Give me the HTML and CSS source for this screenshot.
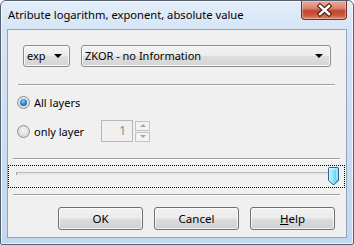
FILE: index.html
```html
<!DOCTYPE html>
<html>
  <head>
    <meta charset="utf-8">
    <title>Atribute logarithm, exponent, absolute value</title>
    <link rel="stylesheet" href="styles.css">
  </head>
  <body>
    <div class="window">
      <div class="titlebar">
        <span class="title">Atribute logarithm, exponent, absolute value</span>
        <div class="close">
          <svg width="46" height="19" viewBox="0 0 46 19">
            <path d="M19 6 L28 14 M28 6 L19 14" stroke="#4a1d15" stroke-width="4.5" stroke-linecap="square"/>
            <path d="M19 6 L28 14 M28 6 L19 14" stroke="#fff" stroke-width="2.4" stroke-linecap="square"/>
          </svg>
        </div>
      </div>

      <div class="client">
        <div class="combos">
          <div class="combo combo-small"><span>exp</span><i class="arrow"></i></div>
          <div class="combo combo-wide"><span>ZKOR - no Information</span><i class="arrow"></i></div>
        </div>

        <div class="sep sep-first"></div>

        <div class="opt opt-first">
          <span class="radio checked"></span>
          <span class="label">All layers</span>
        </div>
        <div class="opt">
          <span class="radio"></span>
          <span class="label label-fixed">only layer</span>
          <div class="spin-edit">1</div>
          <div class="spin-btns">
            <div class="spin-btn"><i class="up"></i></div>
            <div class="spin-btn"><i class="down"></i></div>
          </div>
        </div>

        <div class="sep sep-wide"></div>

        <div class="slider">
          <div class="track"></div>
          <svg class="thumb" width="11" height="19" viewBox="0 0 11 19">
            <defs>
              <linearGradient id="tg" x1="0" y1="0" x2="1" y2="0">
                <stop offset="0" stop-color="#d6f8ff"/>
                <stop offset="0.45" stop-color="#8ee6fb"/>
                <stop offset="1" stop-color="#3fc3ea"/>
              </linearGradient>
            </defs>
            <path d="M1.5 0.5 H9.5 Q10.5 0.5 10.5 1.5 V13.5 L6 17.5 H5 L0.5 13.5 V1.5 Q0.5 0.5 1.5 0.5 Z" fill="url(#tg)" stroke="#2c628b"/>
            <path d="M2 2 H9 V12.5" fill="none" stroke="#e8fcff" stroke-width="1"/>
          </svg>
        </div>

        <div class="sep sep-wide sep-last"></div>

        <div class="buttons">
          <button class="btn">OK</button>
          <button class="btn">Cancel</button>
          <button class="btn"><u>H</u>elp</button>
        </div>
      </div>
    </div>
  </body>
</html>
```

FILE: styles.css
```css
html, body {
  margin: 0;
  padding: 0;
  background: #fff;
}

body {
  font-family: "Noto Sans", "DejaVu Sans", sans-serif;
  font-size: 11px;
  color: #000;
}

.window {
  width: 354px;
  height: 245px;
  box-sizing: border-box;
  border: 1px solid #56606c;
  border-radius: 6px 6px 2px 2px;
  background: linear-gradient(to bottom, #e4eef9 0, #d4e4f5 30px, #c3d8ef 100%);
  box-shadow: inset 0 0 0 1px rgba(255, 255, 255, 0.7);
  display: flex;
  flex-direction: column;
  overflow: hidden;
}

.titlebar {
  height: 28px;
  display: flex;
  align-items: flex-start;
}

.title {
  margin: 6px 0 0 7px;
  line-height: 16px;
  font-size: 11.2px;
}

.close {
  margin-left: auto;
  margin-right: 6px;
  width: 46px;
  height: 19px;
  box-sizing: border-box;
  border: 1px solid #6e2c22;
  border-top: 0;
  border-radius: 0 0 4px 4px;
  background: linear-gradient(to bottom, #e9ab98 0, #d98672 40%, #c4432c 55%, #cc5a42 80%, #de8a72 100%);
  box-shadow: inset 0 0 0 1px rgba(255, 220, 210, 0.45);
}

.close svg {
  display: block;
  margin: -1px 0 0 -1px;
}

.client {
  margin: 0 6px 6px 6px;
  flex: 1;
  border: 1px solid #8ea3bc;
  background: #f0f0f0;
  display: flex;
  flex-direction: column;
}

.combos {
  display: flex;
  gap: 11px;
  margin: 15px 0 0 15px;
}

.combo {
  height: 22px;
  box-sizing: border-box;
  border: 1px solid #8c8c8c;
  border-radius: 3px;
  background: linear-gradient(to bottom, #f3f3f3 0, #ececec 48%, #dedede 52%, #d4d4d4 100%);
  box-shadow: inset 0 0 0 1px rgba(255, 255, 255, 0.8);
  display: flex;
  align-items: center;
  padding: 0 7px 0 3px;
}

.combo span {
  flex: 1;
  line-height: 18px;
}

.combo-small {
  width: 47px;
}

.combo-wide {
  width: 250px;
}

.arrow {
  width: 0;
  height: 0;
  border-left: 4px solid transparent;
  border-right: 4px solid transparent;
  border-top: 4px solid #000;
}

.sep {
  height: 0;
  border-top: 1px solid #a0a0a0;
  border-bottom: 1px solid #fff;
}

.sep-first {
  margin: 17px 11px 0 10px;
}

.sep-wide {
  margin: 16px 6px 0 5px;
}

.sep-last {
  margin-top: 6px;
}

.opt {
  display: flex;
  align-items: center;
  height: 22px;
  margin-left: 9px;
  margin-top: 7px;
}

.opt-first {
  margin-top: 5px;
}

.radio {
  width: 13px;
  height: 13px;
  box-sizing: border-box;
  border-radius: 50%;
  border: 1px solid #8e8f8f;
  background: radial-gradient(circle at 50% 40%, #f4f4f4 0, #e0e0e0 55%, #cfcfcf 100%);
  margin-right: 4px;
  position: relative;
}

.radio.checked::after {
  content: "";
  position: absolute;
  left: 2px;
  top: 2px;
  width: 7px;
  height: 7px;
  border-radius: 50%;
  background: radial-gradient(circle at 45% 35%, #8fd2f7 0, #2a8ad4 45%, #134f84 100%);
}

.label-fixed {
  width: 67px;
}

.spin-edit {
  width: 32px;
  height: 22px;
  box-sizing: border-box;
  border: 1px solid #b5b8bc;
  background: #f0f0f0;
  color: #8a8a8a;
  text-align: right;
  padding-right: 6px;
  line-height: 19px;
  font-size: 12px;
}

.spin-btns {
  margin-left: 2px;
  display: flex;
  flex-direction: column;
  gap: 1px;
}

.spin-btn {
  width: 15px;
  height: 10px;
  box-sizing: border-box;
  border: 1px solid #c2c4c6;
  background: #f3f3f3;
  display: flex;
  align-items: center;
  justify-content: center;
}

.spin-btn i {
  width: 0;
  height: 0;
  border-left: 3px solid transparent;
  border-right: 3px solid transparent;
}

.spin-btn .up {
  border-bottom: 3px solid #a7a7a7;
}

.spin-btn .down {
  border-top: 3px solid #a7a7a7;
}

.slider {
  margin-top: 5px;
  width: 337px;
  height: 23px;
  box-sizing: border-box;
  border: 1px dotted #000;
  position: relative;
}

.track {
  position: absolute;
  left: 7px;
  top: 6px;
  width: 314px;
  height: 2px;
  border-top: 1px solid #b9b9b9;
  background: #e6e6e6;
  border-left: 1px solid #9a9a9a;
}

.thumb {
  position: absolute;
  left: 319px;
  top: 1px;
}

.buttons {
  display: flex;
  justify-content: flex-end;
  gap: 11px;
  margin: 11px 11px 0 0;
}

.btn {
  width: 85px;
  height: 23px;
  box-sizing: border-box;
  border: 1px solid #707070;
  border-radius: 3px;
  background: linear-gradient(to bottom, #f2f2f2 0, #ebebeb 48%, #dddddd 52%, #cfcfcf 100%);
  box-shadow: inset 0 0 0 1px rgba(255, 255, 255, 0.75);
  font-family: inherit;
  font-size: 11.5px;
  color: #000;
  padding: 0;
}
```
